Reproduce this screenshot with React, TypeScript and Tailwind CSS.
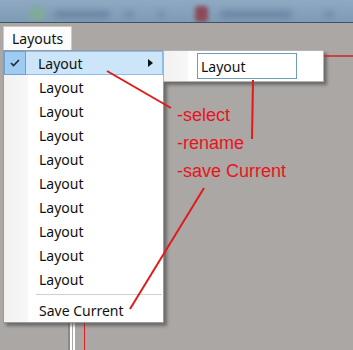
import React from "react";

const items = Array.from({ length: 10 }, () => "Layout");

const CheckIcon = () => (
  <svg width="10" height="8" viewBox="0 0 10 8" className="block">
    <path d="M1 4 L3.5 6.5 L9 1" fill="none" stroke="#1c2a3a" strokeWidth="1.6" />
  </svg>
);

const Taskbar = () => (
  <div className="relative h-[23px] w-full overflow-hidden border-b border-[#3f5264] bg-gradient-to-b from-[#8fa9c2] to-[#7e9bb7]">
    <div className="absolute left-[30px] top-[7px] h-[14px] w-[14px] rounded-full bg-[#7fae8f] blur-[3px]" />
    <div className="absolute left-[54px] top-[11px] h-[7px] w-[56px] rounded bg-[#6a84a0] blur-[3px]" />
    <div className="absolute left-[125px] top-[12px] h-[5px] w-[8px] bg-[#6a84a0] blur-[3px]" />
    <div className="absolute left-[158px] top-[12px] h-[5px] w-[6px] bg-[#6a84a0] blur-[3px]" />
    <div className="absolute left-[195px] top-[6px] h-[16px] w-[13px] rounded-sm bg-[#8c4a56] blur-[2px]" />
    <div className="absolute left-[220px] top-[11px] h-[7px] w-[72px] rounded bg-[#6a84a0] blur-[3px]" />
    <div className="absolute left-[325px] top-[12px] h-[5px] w-[8px] bg-[#6a84a0] blur-[3px]" />
  </div>
);

export default function App() {
  return (
    <div
      className="relative h-[350px] w-[353px] overflow-hidden bg-[#aba7a4]"
      style={{ fontFamily: '"Noto Sans", "Open Sans", sans-serif' }}
    >
      <Taskbar />

      {/* things behind the menu */}
      <div className="absolute left-[68px] top-[300px] h-[50px] w-[2px] bg-[#8c8884]" />
      <div className="absolute left-[70px] top-[300px] h-[50px] w-[2px] bg-white" />
      <div className="absolute left-[73px] top-[300px] h-[50px] w-[2px] bg-white" />
      <div className="absolute left-[84px] top-[300px] h-[50px] w-[1px] bg-[#e02020]" />

      <div className="relative pl-[3px] pt-[3px]">
        <div className="flex h-[24px] w-[69px] items-center border border-b-0 border-[#c9c9c9] bg-[#fbfbfb] pl-[8px] text-[14px] text-[#111]">
          Layouts
        </div>

        <div className="flex items-start">
          <div className="relative w-[161px] border border-[#9a9a9a] bg-white shadow-[3px_3px_3px_rgba(60,60,60,0.55)]">
            <div className="absolute bottom-0 left-0 top-0 w-[24px] bg-gradient-to-r from-[#f1f1f1] to-[#f7f7f7]" />
            <div className="relative">
              {items.map((label, i) =>
                i === 0 ? (
                  <div key={i} className="flex h-[24px]">
                    <div className="flex w-[22px] items-center justify-center border border-[#6ba0d2] bg-[#9fcbf1]">
                      <CheckIcon />
                    </div>
                    <div className="flex flex-1 items-center justify-between border border-l-0 border-[#8ebce6] bg-[#cde5f8] pl-[12px] pr-[9px] text-[14px] text-[#111]">
                      <span>{label}</span>
                      <svg width="5" height="8" viewBox="0 0 5 8">
                        <path d="M0 0 L5 4 L0 8 Z" fill="#111" />
                      </svg>
                    </div>
                  </div>
                ) : (
                  <div key={i} className="flex h-[24px] items-center pl-[35px] text-[14px] text-[#111]">
                    {label}
                  </div>
                )
              )}
              <div className="flex h-[7px] items-center pl-[32px] pr-[1px]">
                <div className="h-px w-full bg-[#cfcfcf]" />
              </div>
              <div className="flex h-[24px] items-center pl-[35px] text-[14px] text-[#111]">Save Current</div>
            </div>
          </div>

          <div className="relative -ml-[1px] flex h-[32px] w-[161px] items-center border border-[#b4b4b4] bg-white shadow-[3px_3px_3px_rgba(60,60,60,0.55)]">
            <div className="h-full w-[24px] bg-gradient-to-r from-[#f1f1f1] to-[#f7f7f7]" />
            <div className="ml-[9px] flex h-[26px] w-[100px] items-center border border-[#6c9fb2] bg-white pl-[3px] text-[14px] text-[#111]">
              Layout
            </div>
          </div>
        </div>
      </div>

      {/* annotations */}
      <svg className="pointer-events-none absolute left-0 top-0" width="353" height="350">
        <g stroke="#e01b1b" strokeWidth="2" fill="none">
          <line x1="107" y1="71" x2="171" y2="108" />
          <line x1="253" y1="80" x2="252" y2="139" />
          <line x1="204" y1="188" x2="130" y2="309" />
        </g>
        <line x1="324" y1="56" x2="353" y2="56" stroke="#d02020" strokeWidth="1.5" />
      </svg>
      <div
        className="absolute left-[177px] top-[101px] flex flex-col text-[18px] leading-[28px] text-[#e8141c]"
        style={{ fontFamily: '"Liberation Sans", Arial, sans-serif' }}
      >
        <span>-select</span>
        <span>-rename</span>
        <span>-save Current</span>
      </div>
    </div>
  );
}
